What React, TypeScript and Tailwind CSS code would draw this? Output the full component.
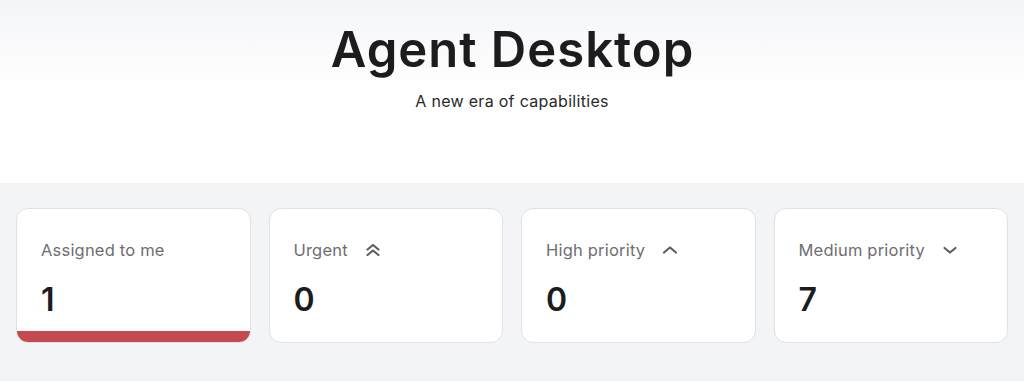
import React from "react";

type Card = { label: string; value: string; icon?: React.ReactNode; active?: boolean };

const Double = () => (
  <svg width="16" height="14" viewBox="0 0 16 14" fill="none" stroke="currentColor" strokeWidth="2.2" strokeLinecap="round" strokeLinejoin="round">
    <path d="M2.5 6.5 L8 2 L13.5 6.5" />
    <path d="M2.5 12 L8 7.5 L13.5 12" />
  </svg>
);
const Up = () => (
  <svg width="16" height="10" viewBox="0 0 16 10" fill="none" stroke="currentColor" strokeWidth="2.2" strokeLinecap="round" strokeLinejoin="round">
    <path d="M2 7.5 L8 2.5 L14 7.5" />
  </svg>
);
const Down = () => (
  <svg width="16" height="10" viewBox="0 0 16 10" fill="none" stroke="currentColor" strokeWidth="2.2" strokeLinecap="round" strokeLinejoin="round">
    <path d="M2.5 3 L8 7.5 L13.5 3" />
  </svg>
);

const cards: Card[] = [
  { label: "Assigned to me", value: "1", active: true },
  { label: "Urgent", value: "0", icon: <Double /> },
  { label: "High priority", value: "0", icon: <Up /> },
  { label: "Medium priority", value: "7", icon: <Down /> },
];

export default function App() {
  return (
    <div
      className="w-[1024px] h-[385px] overflow-hidden bg-white flex flex-col"
      style={{ fontFamily: "Inter, 'Noto Sans', sans-serif" }}
    >
      <div className="h-[183px] bg-gradient-to-b from-[#f4f5f7] via-white to-white flex flex-col items-center">
        <h1 className="mt-[24px] text-[49px] leading-[52px] font-semibold text-[#1c1c1e] tracking-[1px] pl-[1px]">
          Agent Desktop
        </h1>
        <p className="mt-[15px] text-[16px] leading-[20px] text-[#2a2a2a] tracking-[0.3px]">A new era of capabilities</p>
      </div>
      <div className="h-[198px] bg-[#f3f4f6] px-[16px] pt-[25px] flex gap-[18px]">
        {cards.map((c) => (
          <div
            key={c.label}
            className="flex-1 h-[135px] bg-white rounded-[12px] border border-[#dfe1e6] flex flex-col overflow-hidden"
          >
            <div className="px-[24px] pt-[31px] flex items-center gap-[17px] text-[16.5px] leading-[20px] text-[#6e6e72] tracking-[0.2px]">
              <span>{c.label}</span>
              {c.icon && <span className="text-[#5f5f63] flex">{c.icon}</span>}
            </div>
            <div className="px-[24px] mt-[24px] text-[32px] leading-[32px] font-semibold text-[#1c1c1e]">
              {c.value}
            </div>
            <div className="flex-1" />
            {c.active && <div className="h-[11px] bg-[#c44a4f]" />}
          </div>
        ))}
      </div>
      <div className="flex-1 bg-white" />
    </div>
  );
}
